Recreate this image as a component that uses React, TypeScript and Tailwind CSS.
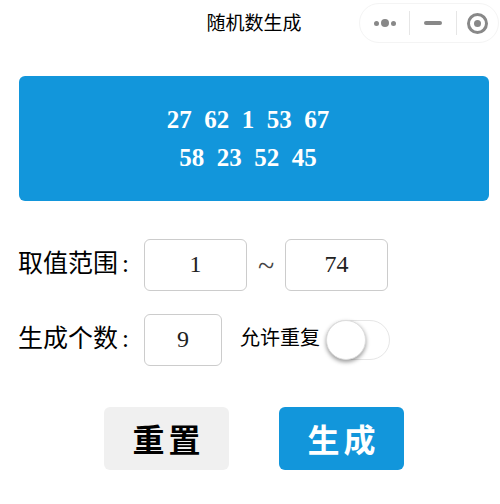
const font = { fontFamily: '"Liberation Serif", "Noto Sans CJK SC", serif' }

function NumberBox({ value, width }: { value: string; width: string }) {
  return (
    <div className={`${width} h-[52px] pb-[2px] flex items-center justify-center rounded-[6px] border border-[#cccccc] text-[24px] text-[#222]`}>
      {value}
    </div>
  )
}

function Capsule() {
  return (
    <div className="w-[140px] h-[40px] rounded-full border border-[#f4f4f4] flex items-center">
      <div className="w-[48px] flex items-center justify-center gap-[2px] ml-[1px]">
        <span className="w-[5px] h-[5px] rounded-full bg-[#888]" />
        <span className="w-[8px] h-[8px] rounded-full bg-[#888]" />
        <span className="w-[5px] h-[5px] rounded-full bg-[#888]" />
      </div>
      <div className="w-px h-[24px] bg-[#e6e6e6]" />
      <div className="w-[46px] flex items-center justify-center">
        <span className="w-[18px] h-[4px] rounded-full bg-[#888]" />
      </div>
      <div className="w-px h-[24px] bg-[#e6e6e6]" />
      <div className="flex-1 flex justify-start pl-[10px]">
        <div className="w-[21px] h-[21px] rounded-full border-[3px] border-[#888] flex items-center justify-center">
          <span className="w-[7px] h-[7px] rounded-full bg-[#888]" />
        </div>
      </div>
    </div>
  )
}

export default function App() {
  const rows = [['27', '62', '1', '53', '67'], ['58', '23', '52', '45']]

  return (
    <div style={font} className="w-[500px] h-[504px] bg-white text-black overflow-hidden">
      {/* タイトルバー */}
      <div className="h-[48px] flex items-center relative">
        <div className="w-full text-center text-[19px] pl-[8px]">随机数生成</div>
        <div className="absolute left-[359px] top-[3px]">
          <Capsule />
        </div>
      </div>

      <div className="pl-[19px] pr-[11px] pt-[28px]">
        <div className="h-[125px] pr-[12px] rounded-[6px] bg-[#1296db] text-white font-bold text-[25px] leading-[38px] flex flex-col items-center justify-center">
          {rows.map((row) => (
            <div key={row[0]} className="flex gap-[12.5px]">
              {row.map((n) => (
                <span key={n}>{n}</span>
              ))}
            </div>
          ))}
        </div>

        <div className="mt-[38px] flex items-center">
          <div className="w-[125px] text-[25px] leading-none -ml-px -mt-[3px]">
            取值范围<span className="ml-[4px]">:</span>
          </div>
          <NumberBox value="1" width="w-[103px] ml-px" />
          <div className="w-[38px] pt-[2px] text-center text-[30px] text-[#444] leading-none">~</div>
          <NumberBox value="74" width="w-[103px]" />
        </div>

        <div className="mt-[23px] flex items-center">
          <div className="w-[125px] text-[25px] leading-none -ml-px -mt-[3px]">
            生成个数<span className="ml-[4px]">:</span>
          </div>
          <NumberBox value="9" width="w-[78px] ml-px" />
          <div className="ml-[18px] -mt-[4px] text-[20px] leading-none">允许重复</div>
          <div className="ml-[6px] -mt-[1px] w-[64px] h-[40px] rounded-full border border-[#e6e6e6] relative">
            <div className="absolute -left-px -top-px w-[40px] h-[40px] rounded-full bg-white border border-[#ddd] shadow-[0_2px_4px_rgba(0,0,0,0.4)]" />
          </div>
        </div>

        <div className="mt-[41px] flex justify-center gap-[50px]">
          <button className="w-[125px] h-[63px] pt-[5px] pl-[4px] rounded-[6px] bg-[#f0f0f0] text-[32px] font-bold tracking-[4px]">重置</button>
          <button className="w-[125px] h-[63px] pt-[5px] pl-[4px] rounded-[6px] bg-[#1296db] text-white text-[32px] font-bold tracking-[4px]">生成</button>
        </div>
      </div>
    </div>
  )
}
